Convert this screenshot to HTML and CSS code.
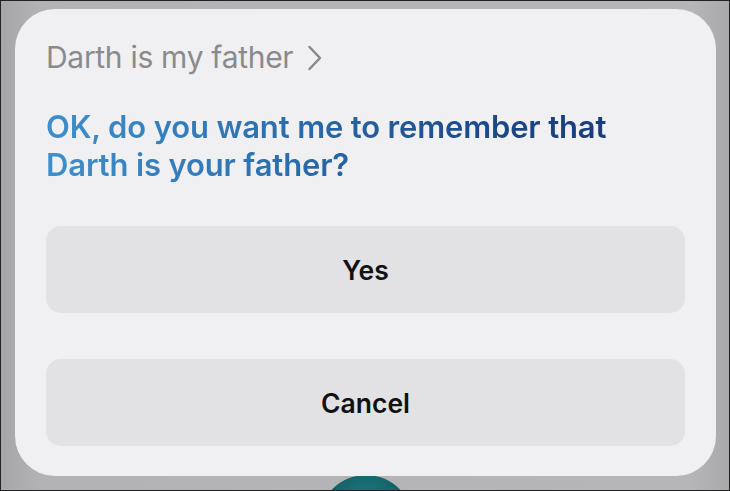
FILE: index.html
```html
<!DOCTYPE html>
<html>
<head>
  <title>Siri - Remember</title>
  <meta charset="UTF-8" />
  <link rel="stylesheet" href="styles.css">
</head>
<body>
  <div class="screen">
    <!-- Siri result card -->
    <div class="card">
      <div class="query">
        Darth is my father
        <svg class="chevron" width="15" height="26" viewBox="0 0 15 26">
          <path d="M2.5 2 L13 13 L2.5 24" fill="none" stroke="#88888c" stroke-width="2.5" stroke-linecap="round" stroke-linejoin="round"/>
        </svg>
      </div>
      <p class="answer">OK, do you want me to remember that Darth is your father?</p>
      <div class="actions">
        <button class="btn">Yes</button>
        <button class="btn">Cancel</button>
      </div>
    </div>
    <div class="orb"></div>
  </div>
</body>
</html>
```

FILE: styles.css
```css
html, body { margin: 0; height: 100%; }
body {
  background: #222;
  font-family: Inter, "Noto Sans", sans-serif;
}
.screen {
  position: relative;
  box-sizing: border-box;
  margin: 1px;
  height: 489px;
  background: linear-gradient(90deg, #a6a6a9 0, #b3b3b6 40px, #b6b6b9 690px, #a9a9ac 100%);
  padding: 8px 13px 0 14px;
  overflow: hidden;
}
.card {
  background: #f0f0f2;
  border-radius: 40px;
  height: 467px;
  box-sizing: border-box;
  padding: 29px 31px 0 31px;
  position: relative;
  z-index: 1;
}
.query {
  font-size: 30px;
  color: #8a8a8e;
  letter-spacing: -0.3px;
  display: flex;
  align-items: center;
  gap: 14px;
  height: 38px;
}
.chevron { margin-top: 2px; }
.answer {
  margin: 32px 0 0;
  font-size: 31px;
  font-weight: 600;
  line-height: 38px;
  letter-spacing: -0.15px;
  background: linear-gradient(90deg, #3f8fcc 0, #2f74b2 200px, #1c4c8c 420px, #173a78 580px);
  -webkit-background-clip: text;
  background-clip: text;
  color: transparent;
  width: 580px;
}
.actions {
  margin-top: 42px;
  display: flex;
  flex-direction: column;
  gap: 46px;
}
.btn {
  height: 87px;
  border: none;
  border-radius: 15px;
  background: #e2e2e5;
  font-family: inherit;
  font-size: 26.5px;
  font-weight: 600;
  color: #111;
}
.orb {
  position: absolute;
  left: 318px;
  top: 474px;
  width: 94px;
  height: 94px;
  border-radius: 50%;
  background: radial-gradient(circle at 50% 30%, #1d7a80, #12585f 60%);
}
```
